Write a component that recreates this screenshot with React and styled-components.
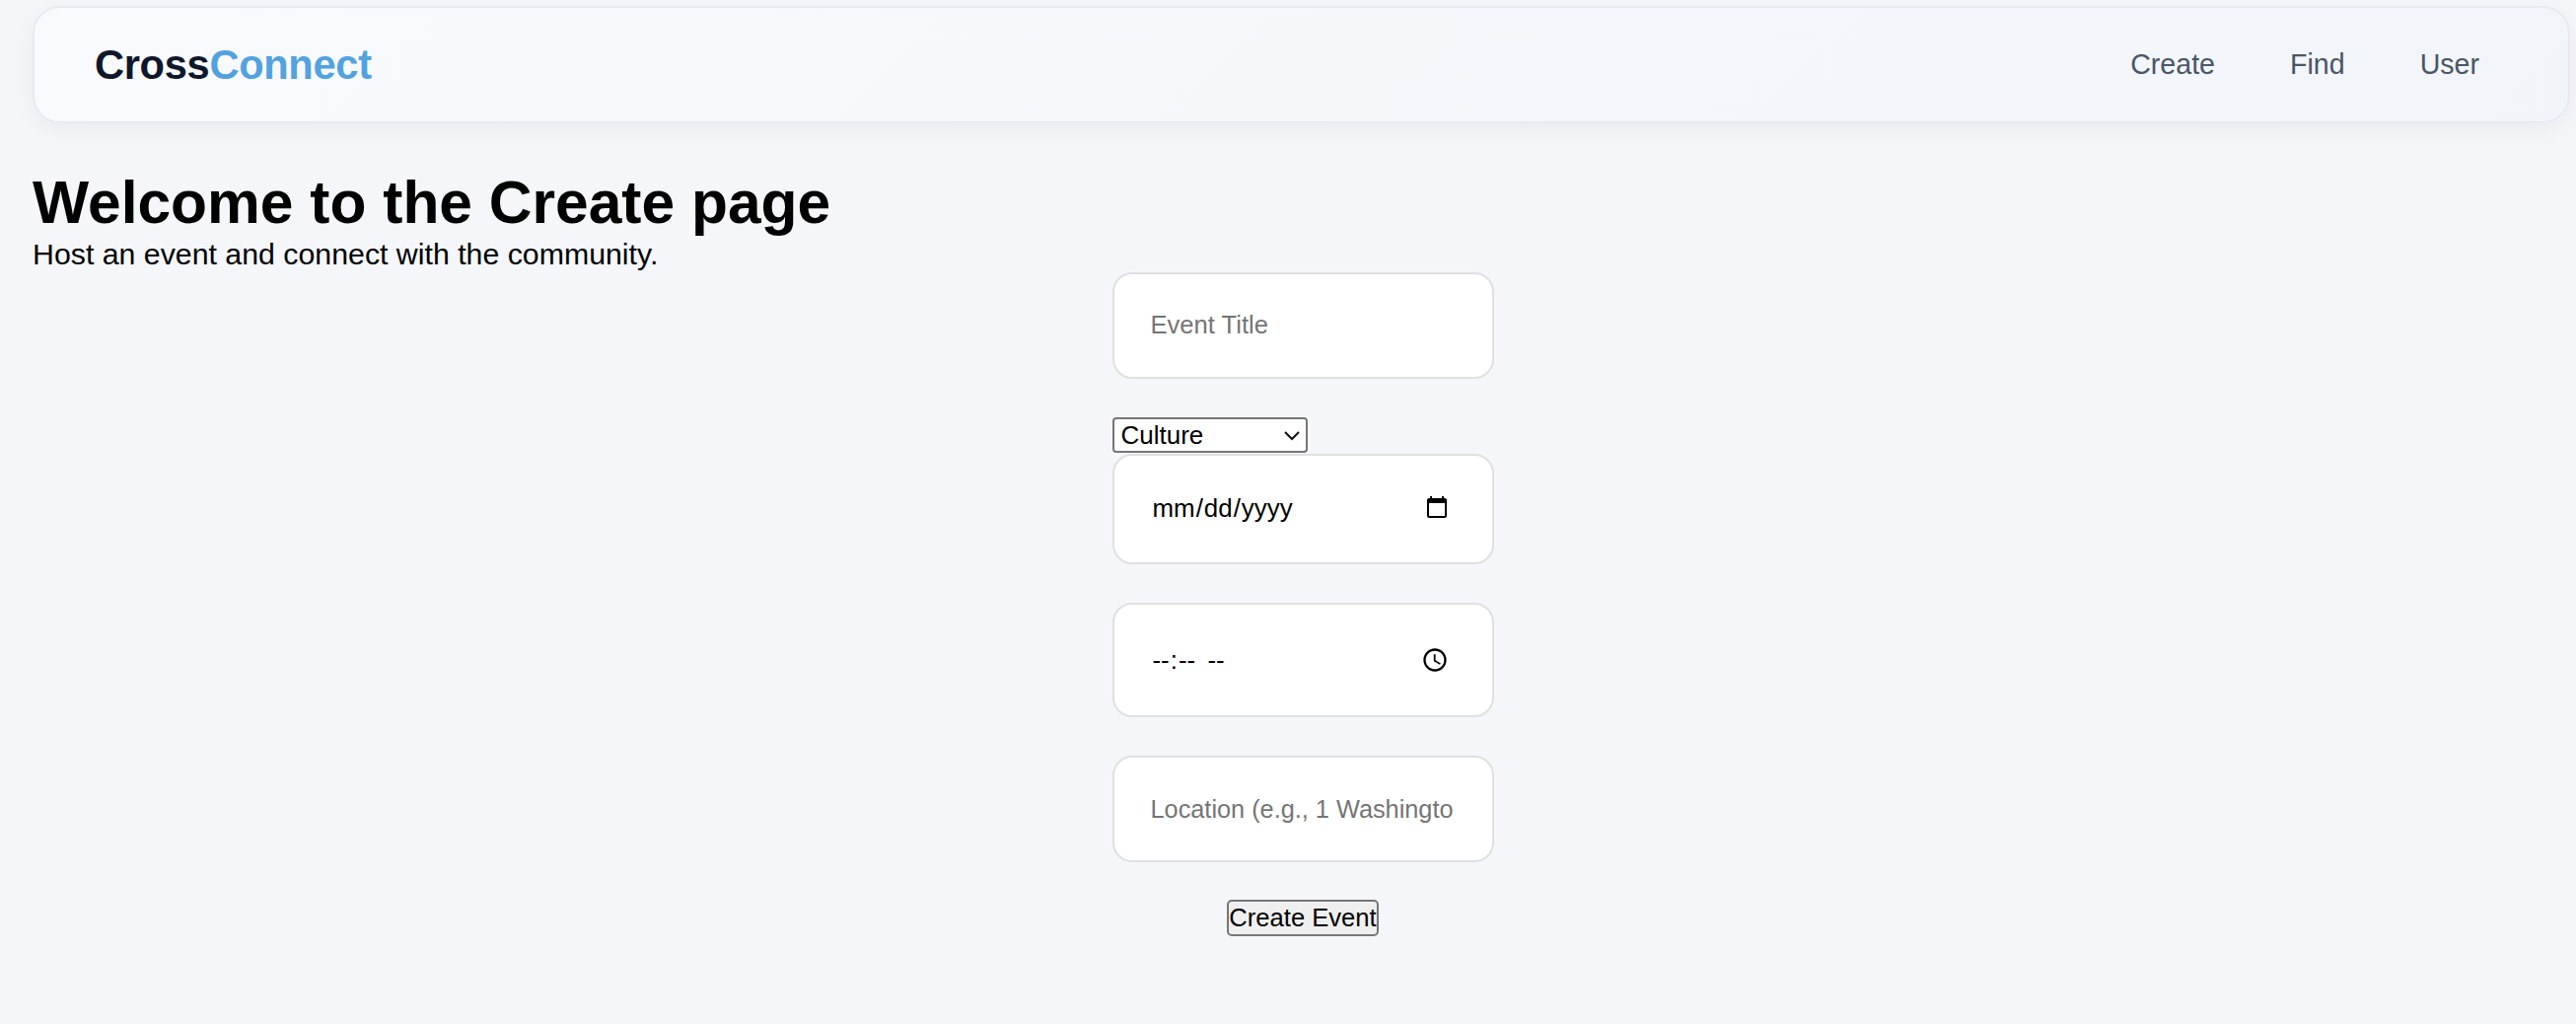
import React from "react";
import styled, { createGlobalStyle } from "styled-components";

const Global = createGlobalStyle`
  html, body { margin: 0; padding: 0; }
  body {
    background: #f4f6fa;
    color: #000;
    font-family: "Liberation Sans", Arial, sans-serif;
    min-height: 1038px;
  }
`;

const Page = styled.div`
  display: flex;
  flex-direction: column;
  padding: 6px 6px 0 33px;
`;

const Navbar = styled.nav`
  display: flex;
  align-items: center;
  justify-content: space-between;
  box-sizing: border-box;
  height: 119px;
  padding: 0 90px 0 61px;
  background: linear-gradient(135deg, #f9fafd 0%, #f1f5f9 100%);
  border: 2px solid #e6eaf1;
  border-radius: 28px;
  box-shadow: 0 6px 24px rgba(15, 23, 42, 0.05);
`;

const Brand = styled.div`
  font-size: 41.6px;
  font-weight: 700;
  letter-spacing: -0.3px;
  color: #0f172a;
`;

const BrandAccent = styled.span`
  color: #52a2e0;
`;

const NavLinks = styled.div`
  display: flex;
  gap: 76px;
`;

const NavLink = styled.a`
  font-size: 28.6px;
  color: #4a5568;
`;

const Title = styled.h1`
  margin: 44px 0 0;
  font-size: 60.5px;
  line-height: 72px;
  font-weight: 700;
`;

const Subtitle = styled.p`
  margin: 0;
  font-size: 30.3px;
  line-height: 33px;
`;

const Form = styled.form`
  display: flex;
  flex-direction: column;
  align-self: center;
  width: 387px;
  margin: 2px 0 0 3px;
`;

const Field = styled.input`
  box-sizing: border-box;
  width: 100%;
  height: ${(p) => p.$h}px;
  margin-bottom: ${(p) => p.$mb}px;
  padding: 0 ${(p) => p.$pr || 38}px ${(p) => p.$pb || 0}px ${(p) => p.$pl || 37}px;
  background: #fff;
  border: 2px solid #e0e0e0;
  border-radius: 20px;
  font-family: "Liberation Sans", Arial, sans-serif;
  font-size: ${(p) => p.$fs || 25.6}px;
  color: #000;
  outline: none;
  &::placeholder { color: #757575; }
  &::-webkit-datetime-edit-ampm-field { margin-left: 5px; }
`;

const SelectWrap = styled.div`
  position: relative;
  align-self: flex-start;
  width: 198px;
  height: 36px;
  margin-bottom: 1px;
`;

const Select = styled.select`
  box-sizing: border-box;
  display: block;
  appearance: none;
  width: 100%;
  height: 100%;
  padding: 0 0 0 7px;
  background: #fff;
  border: 2px solid #767676;
  border-radius: 4px;
  font-family: "Liberation Sans", Arial, sans-serif;
  font-size: 26px;
  color: #000;
`;

const Chevron = styled.svg`
  position: absolute;
  top: 14px;
  right: 8px;
  width: 16px;
  height: 10px;
  pointer-events: none;
`;

const Submit = styled.button`
  box-sizing: border-box;
  align-self: center;
  width: 154px;
  height: 37px;
  padding: 0;
  background: #efefef;
  border: 2px solid #767676;
  border-radius: 5px;
  font-family: "Liberation Sans", Arial, sans-serif;
  font-size: 25.6px;
  white-space: nowrap;
  color: #000;
`;

export default function App() {
  return (
    <>
      <Global />
      <Page>
        <Navbar>
          <Brand>
            Cross<BrandAccent>Connect</BrandAccent>
          </Brand>
          <NavLinks>
            <NavLink>Create</NavLink>
            <NavLink>Find</NavLink>
            <NavLink>User</NavLink>
          </NavLinks>
        </Navbar>
        <Title>Welcome to the Create page</Title>
        <Subtitle>Host an event and connect with the community.</Subtitle>
        <Form onSubmit={(e) => e.preventDefault()}>
          <Field type="text" placeholder="Event Title" $h={108} $mb={39} $pb={2} />
          <SelectWrap>
            <Select defaultValue="Culture">
              <option>Culture</option>
              <option>Sports</option>
              <option>Music</option>
            </Select>
            <Chevron viewBox="0 0 16 10" fill="none" stroke="#111" strokeWidth="2">
              <path d="M1 1l7 7 7-7" />
            </Chevron>
          </SelectWrap>
          <Field type="date" $h={112} $mb={39} $pl={38} $pr={41} $pb={2} $fs={25.9} />
          <Field type="time" $h={116} $mb={39} $pl={38} $pr={41} $fs={25.9} />
          <Field
            type="text"
            placeholder="Location (e.g., 1 Washington Pl, Newark, NJ)"
            $h={108}
            $mb={38}
            $pr={39}
            $fs={25.3}
          />
          <Submit type="submit">Create Event</Submit>
        </Form>
      </Page>
    </>
  );
}
